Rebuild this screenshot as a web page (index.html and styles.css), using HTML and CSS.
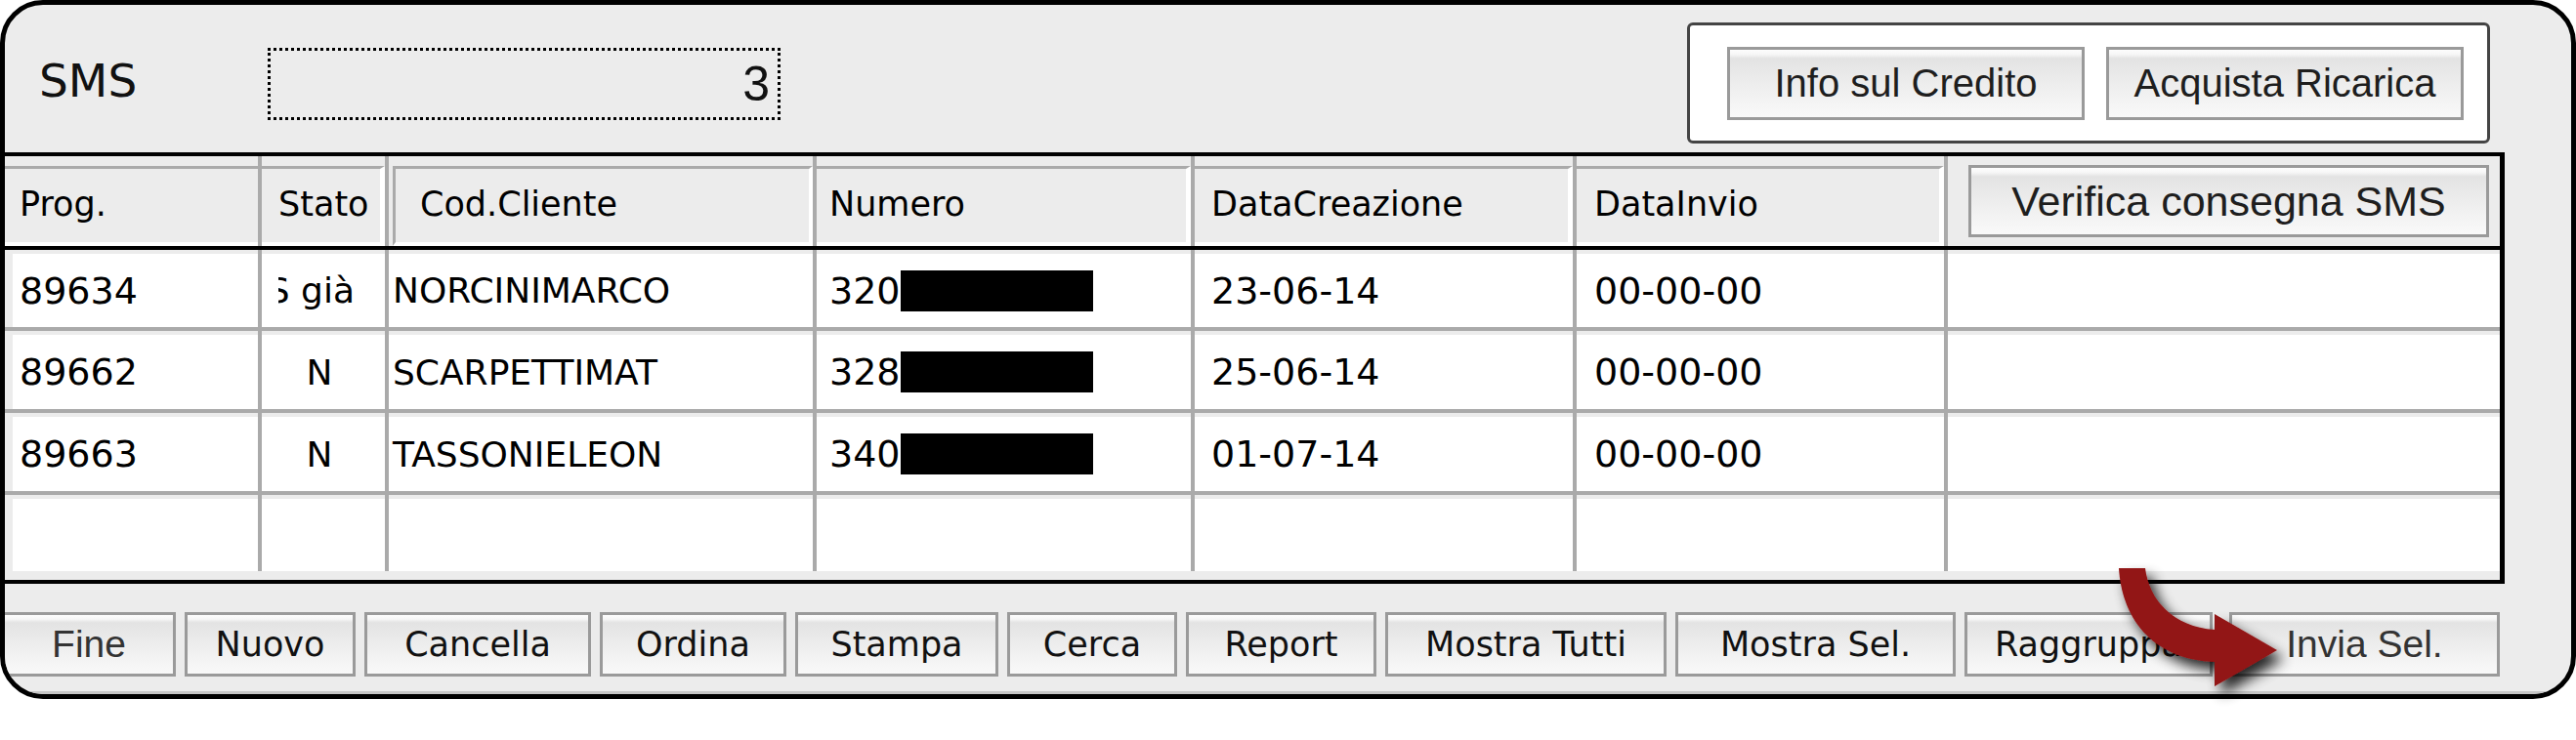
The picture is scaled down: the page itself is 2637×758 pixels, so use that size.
FILE: index.html
```html
<!DOCTYPE html>
<html lang="it">
<head>
<meta charset="utf-8">
<title>SMS</title>
<link rel="stylesheet" href="styles.css">
</head>
<body>
<div class="window">
  <div class="top">
    <span class="title">SMS</span>
    <div class="counter">3</div>
    <div class="credit">
      <div class="btn big">Info sul Credito</div>
      <div class="btn big">Acquista Ricarica</div>
    </div>
  </div>
  <div class="table">
    <div class="head">
      <div class="hc"><div class="hi pad-prog">Prog.</div></div>
      <div class="hc"><div class="hi pad-stato edge">Stato</div></div>
      <div class="hc"><div class="hi pad-cod boxed">Cod.Cliente</div></div>
      <div class="hc"><div class="hi pad-num edge">Numero</div></div>
      <div class="hc"><div class="hi pad-dc edge">DataCreazione</div></div>
      <div class="hc"><div class="hi pad-di edge">DataInvio</div></div>
      <div class="hc last"><div class="btn verify">Verifica consegna SMS</div></div>
    </div>
    <div class="row r1">
      <div class="cell first num">89634</div>
      <div class="cell"><div class="clip"><span>SMS già</span></div></div>
      <div class="cell pad-cod-c">NORCINIMARCO</div>
      <div class="cell pad-num num">320<span class="redact"></span></div>
      <div class="cell pad-dc num">23-06-14</div>
      <div class="cell pad-di num">00-00-00</div>
      <div class="cell last"></div>
    </div>
    <div class="row r2">
      <div class="cell first num">89662</div>
      <div class="cell center">N</div>
      <div class="cell pad-cod-c">SCARPETTIMAT</div>
      <div class="cell pad-num num">328<span class="redact"></span></div>
      <div class="cell pad-dc num">25-06-14</div>
      <div class="cell pad-di num">00-00-00</div>
      <div class="cell last"></div>
    </div>
    <div class="row r3">
      <div class="cell first num">89663</div>
      <div class="cell center">N</div>
      <div class="cell pad-cod-c">TASSONIELEON</div>
      <div class="cell pad-num num">340<span class="redact"></span></div>
      <div class="cell pad-dc num">01-07-14</div>
      <div class="cell pad-di num">00-00-00</div>
      <div class="cell last"></div>
    </div>
    <div class="row r4">
      <div class="cell first"></div>
      <div class="cell"></div>
      <div class="cell"></div>
      <div class="cell"></div>
      <div class="cell"></div>
      <div class="cell"></div>
      <div class="cell last"></div>
    </div>
  </div>
  <div class="bar">
    <div class="btn small lucida">Fine</div>
    <div class="btn small">Nuovo</div>
    <div class="btn small">Cancella</div>
    <div class="btn small">Ordina</div>
    <div class="btn small">Stampa</div>
    <div class="btn small">Cerca</div>
    <div class="btn small">Report</div>
    <div class="btn small">Mostra Tutti</div>
    <div class="btn small">Mostra Sel.</div>
    <div class="btn small">Raggruppa</div>
    <div class="btn small lucida send">Invia Sel.</div>
  </div>
</div>
<svg class="arrow" width="240" height="190" viewBox="0 0 240 190" aria-hidden="true">
  <defs>
    <filter id="sh" x="-30%" y="-30%" width="170%" height="170%">
      <feGaussianBlur in="SourceAlpha" stdDeviation="7"/>
      <feOffset dx="7" dy="9" result="b"/>
      <feComponentTransfer><feFuncA type="linear" slope="0.85"/></feComponentTransfer>
      <feMerge><feMergeNode/><feMergeNode in="SourceGraphic"/></feMerge>
    </filter>
  </defs>
  <path filter="url(#sh)" fill="#921414" d="M19,12 C22,60 50,105 117,108 L117,133 L181,96 L117,59 L117,75 C75,72 50,45 46,12 Z"/>
</svg>
</body>
</html>
```

FILE: styles.css
```css
* { box-sizing: border-box; }

body {
  margin: 0;
  background: #fff;
  position: relative;
  width: 2637px;
  height: 758px;
  overflow: hidden;
  font-family: "DejaVu Sans", Verdana, sans-serif;
  color: #000;
}

.window {
  width: 2637px;
  height: 716px;
  border: 5px solid #000;
  border-radius: 44px;
  background: #ececec;
  overflow: hidden;
  display: flex;
  flex-direction: column;
}

/* ---------- top area ---------- */
.top {
  height: 151px;
  flex: none;
  padding: 9px 83px 0 35px;
  display: flex;
  align-items: center;
}

.title {
  width: 234px;
  font-size: 47px;
  color: #111;
  margin-top: -6px;
}

.counter {
  width: 525px;
  height: 74px;
  border: 3px dotted #000;
  display: flex;
  align-items: center;
  justify-content: flex-end;
  padding-right: 8px;
  font-family: "Liberation Sans", Arial, sans-serif;
  font-size: 50px;
  color: #111;
  margin-top: 2px;
}

.credit {
  margin-left: auto;
  width: 822px;
  height: 124px;
  border: 3px solid #444;
  border-radius: 6px;
  background: #fff;
  display: flex;
  align-items: center;
  gap: 22px;
  padding-left: 38px;
}

/* ---------- buttons ---------- */
.btn {
  border: 3px solid #9a9a9a;
  background: linear-gradient(to bottom, #fdfdfd 0%, #f6f6f6 7%, #e3e3e3 13%, #e9e9e9 35%, #f2f2f2 70%, #f9f9f9 100%);
  display: flex;
  align-items: center;
  justify-content: center;
  font-family: "Liberation Sans", Arial, sans-serif;
  color: #1e1e1e;
  white-space: nowrap;
}

.big {
  width: 366px;
  height: 75px;
  font-size: 40px;
}

.verify {
  width: 533px;
  height: 74px;
  margin-left: 21px;
  font-size: 43px;
}

/* ---------- table ---------- */
.table {
  width: 2559px;
  height: 442px;
  flex: none;
  border-top: 4px solid #000;
  border-right: 5px solid #000;
  border-bottom: 4px solid #000;
  background: #ececec;
}

.head,
.row {
  display: grid;
  grid-template-columns: 263px 130px 438px 387px 391px 380px 1fr;
}

.head {
  height: 96px;
  border-bottom: 4px solid #000;
}

.hc {
  border-right: 4px solid #aaa;
  padding-top: 10px;
}

.hc.last {
  border-right: none;
  padding-top: 0;
  display: flex;
  align-items: center;
}

.hi {
  height: 82px;
  border-top: 3px solid #aaa;
  border-bottom: 4px solid #fff;
  display: flex;
  align-items: center;
  font-size: 35px;
  color: #000;
  white-space: nowrap;
  padding-bottom: 4px;
}

.hi.edge { border-right: 5px solid #fff; }
.hi.boxed {
  margin-left: 4px;
  border-left: 3px solid #aaa;
  border-right: 4px solid #fff;
}

.pad-prog { padding-left: 15px; }
.pad-stato { padding-left: 17px; }
.pad-cod { padding-left: 25px; }
.pad-num { padding-left: 13px; }
.pad-dc { padding-left: 17px; }
.pad-di { padding-left: 18px; }
.pad-cod-c { padding-left: 4px; }

.row { border-bottom: 4px solid #aaa; }
.r1 { height: 83px; }
.r2, .r3 { height: 84px; }
.r4 {
  height: 87px;
  border-bottom: none;
  padding-bottom: 9px;
}

.cell {
  background: #fff;
  border-right: 4px solid #aaa;
  box-shadow: inset 0 4px 0 #ececec;
  padding-top: 4px;
  display: flex;
  align-items: center;
  font-size: 36px;
  white-space: nowrap;
  overflow: hidden;
}

.cell.last { border-right: none; }
.cell.first {
  box-shadow: inset 8px 0 0 #ececec, inset 0 4px 0 #ececec;
  padding-left: 15px;
}
.cell.num { font-size: 38px; }
.cell.center { justify-content: center; padding-right: 8px; }

.clip {
  flex: 1;
  margin-left: 17px;
  margin-right: 31px;
  overflow: hidden;
  display: flex;
  justify-content: flex-end;
}
.clip span { flex: none; }

.redact {
  display: inline-block;
  width: 197px;
  height: 42px;
  background: #000;
}

/* ---------- bottom bar ---------- */
.bar {
  flex: 1;
  display: grid;
  grid-template-columns: 178px 175px 232px 191px 208px 174px 195px 288px 287px 254px 285px;
  column-gap: 9px;
  align-content: start;
  padding-top: 29px;
  margin-left: -3px;
  box-shadow: inset 0 -3px 0 #c6c6c6;
}

.small {
  height: 66px;
  font-family: "DejaVu Sans", Verdana, sans-serif;
  font-size: 35px;
  color: #111;
}

.small.lucida {
  font-family: "Liberation Sans", Arial, sans-serif;
  font-size: 39px;
  color: #333;
}

.send { margin-left: 8px; }

/* ---------- annotation arrow ---------- */
.arrow {
  position: absolute;
  left: 2150px;
  top: 570px;
  overflow: visible;
}
```
